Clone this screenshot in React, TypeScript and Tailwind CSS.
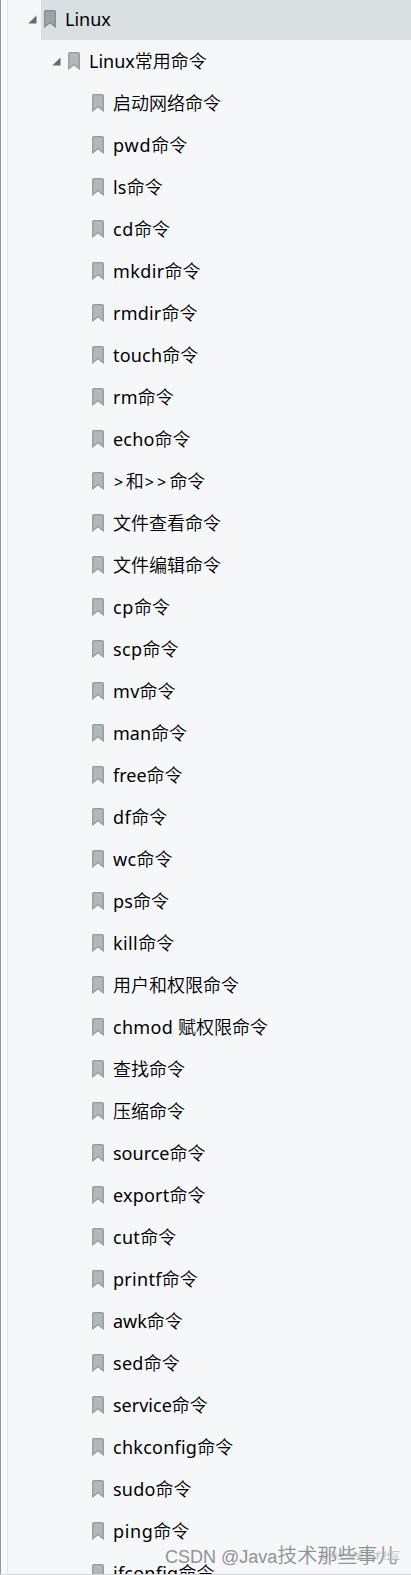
type Command = { latin?: string; cjk: string; tracking?: string };

const commands: Command[] = [
  { cjk: "启动网络命令" },
  { latin: "pwd", cjk: "命令", tracking: "tracking-[0.8px]" },
  { latin: "ls", cjk: "命令", tracking: "tracking-[0.2px]" },
  { latin: "cd", cjk: "命令", tracking: "tracking-[0.6px]" },
  { latin: "mkdir", cjk: "命令", tracking: "tracking-[0.4px]" },
  { latin: "rmdir", cjk: "命令", tracking: "tracking-[0.2px]" },
  { latin: "touch", cjk: "命令", tracking: "tracking-[0.2px]" },
  { latin: "rm", cjk: "命令", tracking: "tracking-[0.2px]" },
  { latin: "echo", cjk: "命令", tracking: "tracking-[0.2px]" },
  { latin: ">", cjk: "和", tracking: "ml-px text-[16px] tracking-[2.5px]" },
  { cjk: "文件查看命令" },
  { cjk: "文件编辑命令" },
  { latin: "cp", cjk: "命令", tracking: "tracking-[0.6px]" },
  { latin: "scp", cjk: "命令", tracking: "tracking-[0.4px]" },
  { latin: "mv", cjk: "命令", tracking: "tracking-[0.3px]" },
  { latin: "man", cjk: "命令" },
  { latin: "free", cjk: "命令" },
  { latin: "df", cjk: "命令", tracking: "tracking-[0.5px]" },
  { latin: "wc", cjk: "命令", tracking: "tracking-[0.3px]" },
  { latin: "ps", cjk: "命令", tracking: "tracking-[0.2px]" },
  { latin: "kill", cjk: "命令", tracking: "tracking-[0.4px]" },
  { cjk: "用户和权限命令" },
  { latin: "chmod ", cjk: "赋权限命令", tracking: "tracking-[0.3px]" },
  { cjk: "查找命令" },
  { cjk: "压缩命令" },
  { latin: "source", cjk: "命令" },
  { latin: "export", cjk: "命令", tracking: "tracking-[0.2px]" },
  { latin: "cut", cjk: "命令", tracking: "tracking-[0.3px]" },
  { latin: "printf", cjk: "命令", tracking: "tracking-[0.3px]" },
  { latin: "awk", cjk: "命令" },
  { latin: "sed", cjk: "命令", tracking: "tracking-[0.3px]" },
  { latin: "service", cjk: "命令" },
  { latin: "chkconfig", cjk: "命令", tracking: "tracking-[0.25px]" },
  { latin: "sudo", cjk: "命令", tracking: "tracking-[0.2px]" },
  { latin: "ping", cjk: "命令", tracking: "tracking-[0.6px]" },
  { latin: "ifconfig", cjk: "命令", tracking: "tracking-[0.25px]" },
];

function Bookmark({ active = false }: { active?: boolean }) {
  return (
    <svg width="12" height="18" viewBox="0 0 12 18" className="shrink-0">
      <path
        d="M1.7 .7H10.3Q11.3 .7 11.3 1.7V16.8L6 12.6L.7 16.8V1.7Q.7 .7 1.7 .7Z"
        fill={active ? "#9ea2ab" : "#b2b7ba"}
        stroke={active ? "#858992" : "#969a9f"}
        strokeWidth="1.3"
      />
    </svg>
  );
}

function Arrow() {
  return (
    <svg width="9" height="9" viewBox="0 0 9 9" className="shrink-0">
      <path d="M8.5 .5V8.5H.3Z" fill="#68696c" />
    </svg>
  );
}

function Label({ latin, cjk, tracking = "" }: Command) {
  return (
    <span className="ml-[9px] leading-[42px] whitespace-pre">
      {latin && <span className={tracking}>{latin}</span>}
      <span className="font-[350]">{cjk}</span>
      {latin === ">" && (
        <>
          <span className="ml-px text-[16px] tracking-[3.2px]">&gt;&gt;</span>
          <span className="font-[350]">命令</span>
        </>
      )}
    </span>
  );
}

export default function App() {
  return (
    <div className="relative flex h-[1575px] w-[411px] overflow-hidden border-b border-[#d5d7db] bg-[#f5f7f9] font-['Noto_Sans','Noto_Sans_CJK_SC',sans-serif] text-[18px] text-black">
      <div className="w-px shrink-0 bg-[#96969b]" />
      <div className="w-[7px] shrink-0 border-r border-[#e4e6e9] bg-[#f8f9fb]" />
      <ul className="min-w-0 flex-1">
        <li className="flex h-10 items-start pl-5">
          <span className="pt-[15px]"><Arrow /></span>
          <div className="ml-1 flex h-10 flex-1 items-start bg-[#dadfe2] pl-[3px]">
            <span className="pt-[10px]"><Bookmark active /></span>
            <span className="ml-[9px] leading-[38px] whitespace-pre">Linux</span>
          </div>
        </li>
        <li className="flex h-[42px] items-center pl-11">
          <Arrow />
          <span className="w-[7px]" />
          <Bookmark />
          <Label latin="Linux" cjk="常用命令" />
        </li>
        {commands.map((item) => (
          <li key={(item.latin ?? "") + item.cjk} className="flex h-[42px] items-center pl-[84px]">
            <Bookmark />
            <Label {...item} />
          </li>
        ))}
      </ul>
      <div className="absolute top-[1548px] left-[320px] font-['Noto_Sans_CJK_SC',sans-serif] text-[9px] leading-4 font-light whitespace-nowrap text-[#a9abad]">
        @稀土掘金技术社区
      </div>
      <div className="absolute top-[1541px] left-[165px] flex items-baseline font-['Liberation_Sans','Noto_Sans_CJK_SC',sans-serif] leading-[30px] whitespace-pre text-[#919396]">
        <span className="text-[18px]">CSDN @Java</span>
        <span className="text-[20px] font-[350]">技术那些事儿</span>
      </div>
    </div>
  );
}
